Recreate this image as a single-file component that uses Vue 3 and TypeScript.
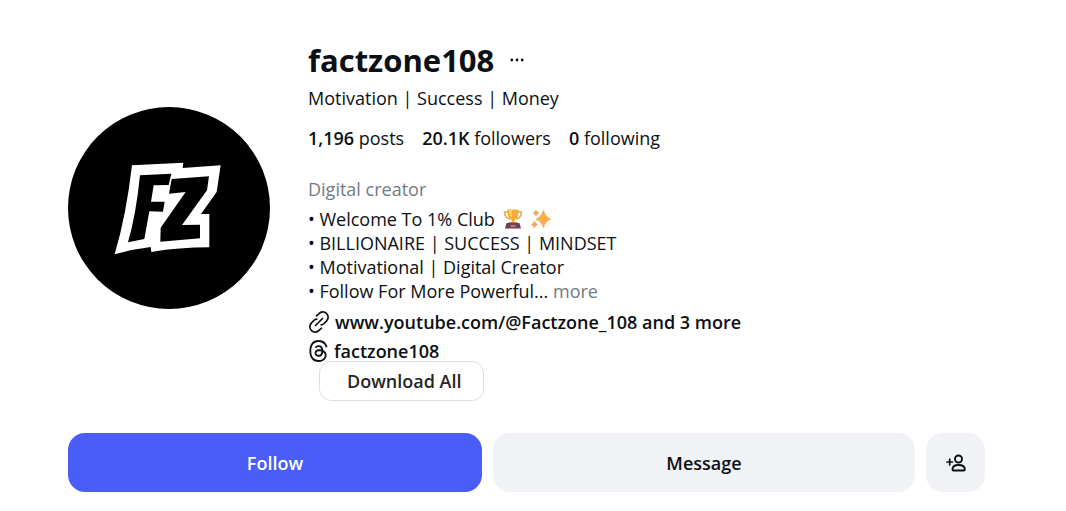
<script setup lang="ts">
interface Stat {
  value: string
  label: string
}

const username = 'factzone108'
const stats: Stat[] = [
  { value: '1,196', label: 'posts' },
  { value: '20.1K', label: 'followers' },
  { value: '0', label: 'following' },
]
</script>

<template>
  <main class="profile">
    <header class="summary">
      <svg class="avatar" viewBox="0 0 202 202" role="img" aria-label="FZ logo">
        <circle cx="101" cy="101" r="101" fill="#000" />
        <g transform="translate(32 38) scale(0.33333)">
          <path fill="#fff" d="M96 61 250 53 248 69 362 61 350 141 303 207 328 207 328 307Q236 307 154 321L152 306Q98 312 44 328Q79 210 96 61Z" />
          <path fill="#000" d="M120 91 214 86 206 120 161 121 153 170 194 170 189 200 148 199Q141 238 133 282L84 292Q108 210 120 91Z" />
          <path fill="#000" d="M215 102 327 94 321 136 246 240 300 239 300 280 181 290 182 248 257 141 207 146Z" />
        </g>
      </svg>

      <section class="info">
        <div class="title-row">
          <h1>{{ username }}</h1>
          <button class="options" type="button" aria-label="Options">
            <svg width="16" height="16" viewBox="0 0 16 16" fill="#0c1014">
              <circle cx="2.8" cy="8" r="1.4" />
              <circle cx="8" cy="8" r="1.4" />
              <circle cx="13.2" cy="8" r="1.4" />
            </svg>
          </button>
        </div>
        <p class="name">Motivation | Success | Money</p>
        <ul class="stats">
          <li v-for="stat in stats" :key="stat.label"><b>{{ stat.value }}</b> {{ stat.label }}</li>
        </ul>
        <p class="category">Digital creator</p>
        <div class="bio">
          <p class="emoji-line">
            • Welcome To 1% Club
            <svg class="emoji" width="20" height="20" viewBox="0 0 20 20" role="img" aria-label="trophy">
              <path d="M5 3H1.5Q1.5 9 7 10M15 3h3.5Q18.500 9 13 10" fill="none" stroke="#e9a552" stroke-width="1.500" />
              <path d="M4.500.5h11Q16 9 11.500 11v3h-3v-3Q4 9 4.500.5Z" fill="#f6ad35" />
              <path d="M6 1h3v8Q6 7 6 1Z" fill="#ffd45e" />
              <path d="M6 13h8l1 2H5Z" fill="#cf7c3e" />
              <path d="M3.500 14h13l1.500 5.500H2Z" fill="#6e405a" />
              <path d="M7.500 16h5v2h-5Z" fill="#b87965" />
            </svg>
            <svg class="emoji" width="20" height="20" viewBox="0 0 20 20" role="img" aria-label="sparkles">
              <path d="M12.500 1.500Q14 8 19.500 10.200Q14 12 12.500 18.500Q10.500 12 5 10.200Q10.500 8 12.500 1.500Z" fill="#f9ae4b" stroke="#f9ae4b" stroke-width="1" stroke-linejoin="round" />
              <path d="M5 1Q5.500 3.500 8 4Q5.500 4.500 5 7Q4.500 4.500 2 4Q4.500 3.500 5 1ZM3.500 12Q4 15 6.500 15.500Q4 16 3.500 19Q3 16 .5 15.500Q3 15 3.500 12Z" fill="#f4a066" stroke="#f4a066" stroke-width=".7" />
            </svg>
          </p>
          <p>• BILLIONAIRE | SUCCESS | MINDSET</p>
          <p>• Motivational | Digital Creator</p>
          <p>• Follow For More Powerful... <button class="more" type="button">more</button></p>
        </div>
        <a class="link website" href="#links">
          <svg width="22" height="22" viewBox="0 0 22 22" fill="none" stroke="#0c1014" stroke-width="1.700" stroke-linecap="round">
            <path d="M8.500 4.800 11 2.600A5.200 5.200 0 0 1 18.700 9.800L16.200 12.500Q15 13.700 13.200 13.900" />
            <path d="M13.500 17.200 11 19.400A5.200 5.200 0 0 1 3.300 12.200L5.800 9.500Q7 8.300 8.800 8.100" />
            <path d="m7.500 14.500 7-7" />
          </svg>
          <span>www.youtube.com/@Factzone_108 and 3 more</span>
        </a>
        <a class="link threads" href="#threads">
          <svg width="21" height="22" viewBox="0 0 192 192" preserveAspectRatio="none" fill="#0c1014">
            <path d="M141.537 88.988a66.667 66.667 0 0 0-2.518-1.143c-1.482-27.307-16.403-42.940-41.457-43.100h-.34c-14.986 0-27.449 6.396-35.120 18.036l13.779 9.452c5.730-8.695 14.724-10.548 21.348-10.548h.229c8.249.053 14.474 2.452 18.503 7.129 2.932 3.405 4.893 8.111 5.864 14.050-7.314-1.243-15.224-1.626-23.680-1.140-23.820 1.371-39.134 15.264-38.105 34.568.522 9.792 5.400 18.216 13.735 23.719 7.047 4.652 16.124 6.927 25.557 6.412 12.458-.683 22.231-5.436 29.049-14.127 5.178-6.600 8.453-15.153 9.899-25.930 5.937 3.583 10.337 8.298 12.767 13.966 4.132 9.635 4.373 25.468-8.546 38.376-11.319 11.308-24.925 16.200-45.488 16.351-22.809-.169-40.060-7.484-51.275-21.742C35.236 139.966 29.808 120.682 29.605 96c.203-24.682 5.630-43.966 16.133-57.317C56.954 24.425 74.204 17.110 97.013 16.940c22.975.170 40.526 7.520 52.171 21.847 5.710 7.026 10.015 15.860 12.853 26.162l16.147-4.308c-3.440-12.680-8.853-23.606-16.219-32.668C147.036 9.607 125.202.195 97.070 0h-.113C68.882.194 47.292 9.642 32.788 28.080 19.882 44.485 13.224 67.315 13.001 95.932L13 96v.067c.224 28.617 6.882 51.447 19.788 67.854C47.292 182.358 68.882 191.806 96.957 192h.113c24.960-.173 42.554-6.708 57.048-21.189 18.963-18.945 18.392-42.692 12.142-57.270-4.484-10.454-13.033-18.945-24.723-24.553ZM98.440 129.507c-10.440.588-21.286-4.098-21.820-14.135-.397-7.442 5.296-15.746 22.461-16.735a101 101 0 0 1 5.788-.169c6.235 0 12.068.606 17.371 1.765-1.978 24.702-13.580 28.713-23.800 29.274Z" />
          </svg>
          <span>{{ username }}</span>
        </a>
        <button class="download" type="button">Download All</button>
      </section>
    </header>

    <div class="actions">
      <button class="action follow" type="button">Follow</button>
      <button class="action message" type="button">Message</button>
      <button class="action suggest" type="button" aria-label="Similar accounts">
        <svg width="20" height="18" viewBox="0 0 20 18" fill="none" stroke="#0c1014" stroke-width="1.900" stroke-linecap="round" stroke-linejoin="round">
          <circle cx="12.500" cy="5" r="3.500" />
          <path d="M6.500 15.500Q6.500 11 12.500 11Q18.800 11 18.800 15.500Q18.800 16.500 17.700 16.500H7.600Q6.500 16.500 6.500 15.500Z" />
          <path d="M1 8h5.500M3.700 5.200v5.600" stroke-width="1.700" />
        </svg>
      </button>
    </div>
  </main>
</template>

<style>
body {
  margin: 0;
  background: #fff;
}
</style>

<style scoped>
.profile {
  padding: 40px 81px 20px 68px;
  color: #0c1014;
  font-family: "Segoe UI", "Open Sans", "Noto Sans", sans-serif;
  font-size: 18px;
  line-height: 24px;
}
h1,
p,
ul {
  margin: 0;
  padding: 0;
}
button {
  padding: 0;
  border: 0;
  background: none;
  color: inherit;
  font: inherit;
  cursor: pointer;
}
svg {
  display: block;
}
.summary {
  display: flex;
  gap: 38px;
}
.avatar {
  flex: none;
  width: 202px;
  height: 202px;
  margin-top: 67px;
}
.info {
  display: flex;
  flex-direction: column;
  align-items: flex-start;
  min-width: 0;
  white-space: nowrap;
}
.title-row {
  display: flex;
  align-items: center;
  gap: 15px;
}
h1 {
  font-size: 31px;
  line-height: 40px;
  font-weight: 700;
}
.name {
  margin-top: 6px;
}
.stats {
  display: flex;
  gap: 18px;
  margin-top: 16px;
  list-style: none;
}
b {
  font-weight: 600;
}
.category {
  margin-top: 27px;
  color: #737a82;
}
.bio {
  margin-top: 6px;
}
.emoji-line {
  display: flex;
  align-items: center;
  gap: 8px;
}
.more {
  color: #737a82;
}
.link {
  display: flex;
  align-items: center;
  gap: 5px;
  color: inherit;
  font-weight: 600;
  text-decoration: none;
}
.website {
  margin-top: 7px;
}
.threads {
  margin-top: 5px;
}
.download {
  box-sizing: border-box;
  height: 40px;
  margin: -2px 0 0 11px;
  padding: 0 21px 0 27px;
  border: 1px solid #dbdfe4;
  border-radius: 12px;
  background: #fff;
  color: #262626;
  font-weight: 600;
}
.actions {
  display: flex;
  gap: 11px;
  margin-top: 32px;
}
.action {
  height: 59px;
  border-radius: 17px;
  background: #f0f2f5;
  font-weight: 600;
}
.follow {
  flex: 414 1 0;
  background: #4a5df9;
  color: #fff;
}
.message {
  flex: 422 1 0;
}
.suggest {
  display: grid;
  flex: none;
  place-items: center;
  width: 59px;
}
</style>
